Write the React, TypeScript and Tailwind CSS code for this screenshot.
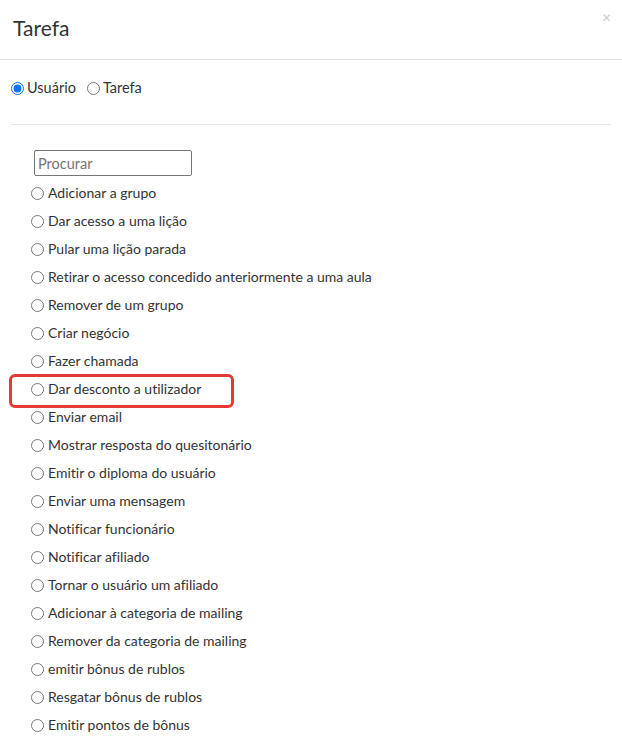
import React from "react";

const items = [
  "Adicionar a grupo",
  "Dar acesso a uma lição",
  "Pular uma lição parada",
  "Retirar o acesso concedido anteriormente a uma aula",
  "Remover de um grupo",
  "Criar negócio",
  "Fazer chamada",
  "Dar desconto a utilizador",
  "Enviar email",
  "Mostrar resposta do quesitonário",
  "Emitir o diploma do usuário",
  "Enviar uma mensagem",
  "Notificar funcionário",
  "Notificar afiliado",
  "Tornar o usuário um afiliado",
  "Adicionar à categoria de mailing",
  "Remover da categoria de mailing",
  "emitir bônus de rublos",
  "Resgatar bônus de rublos",
  "Emitir pontos de bônus",
];

function Radio({ checked }: { checked?: boolean }) {
  return (
    <input
      type="radio"
      defaultChecked={checked}
      className="m-0 h-[13px] w-[13px] shrink-0"
    />
  );
}

export default function App() {
  return (
    <div
      className="w-[622px] h-[744px] overflow-hidden bg-white text-[#333] [font-variant-ligatures:none]"
      style={{ fontFamily: 'Lato, "Liberation Sans", Arial, sans-serif' }}
    >
      <div className="relative flex h-[60px] items-center border-b border-[#e5e5e5] pl-[13px]">
        <h4 className="text-[21px] leading-none text-[#333] -mt-[4px]">Tarefa</h4>
        <span className="absolute right-[11px] top-[10px] text-[15px] leading-none text-[#c8c8c8]">×</span>
      </div>
      <div className="px-[11px]">
        <div className="flex h-[56px] items-center text-[14.5px]">
          <label className="flex items-center gap-[3px]">
            <Radio checked />
            <span className="-mt-[1px]">Usuário</span>
          </label>
          <label className="ml-[11px] flex items-center gap-[3px]">
            <Radio />
            <span className="-mt-[1px]">Tarefa</span>
          </label>
        </div>
        <div className="mt-[8px] border-t border-[#e8e8e8] w-[600px]" />
        <div className="pl-[23px] pt-[25px]">
          <input
            placeholder="Procurar"
            className="h-[26px] w-[158px] rounded-[2px] border border-[#767676] px-[3px] text-[14.5px] text-[#333] placeholder:text-[#757575] outline-none"
          />
        </div>
        <div className="pl-[20px] pt-[3px] text-[14px]">
          {items.map((t, i) => (
            <div key={i} className="relative flex h-[28px] items-center gap-[4px]">
              <Radio />
              <span className="-mt-[2px]">{t}</span>
              {t === "Dar desconto a utilizador" && (
                <div className="pointer-events-none absolute left-[-22px] top-[-1px] h-[34px] w-[225px] rounded-[6px] border-[3px] border-[#e53935]" />
              )}
            </div>
          ))}
        </div>
      </div>
    </div>
  );
}
